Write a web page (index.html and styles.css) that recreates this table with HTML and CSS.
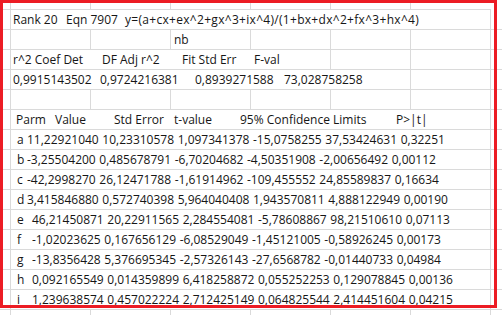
FILE: index.html
```html
<!DOCTYPE html>
<html>
<head>
<meta charset="utf-8">
<link rel="stylesheet" href="styles.css">
</head>
<body>
<div class="sheet">
  <div class="row top"><div class="c"></div><div class="c"></div><div class="c"></div><div class="c"></div><div class="c"></div><div class="c"></div><div class="c"></div></div>

  <div class="row"><div class="c"></div><div class="c span6 pl2"><span class="t w53">Rank 20</span><span class="t w59">Eqn 7907</span><span class="t formula">y=(a+cx+ex^2+gx^3+ix^4)/(1+bx+dx^2+fx^3+hx^4)</span></div><div class="c"></div></div>

  <div class="row"><div class="c"></div><div class="c"></div><div class="c"></div><div class="c pl3">nb</div><div class="c"></div><div class="c"></div><div class="c"></div><div class="c"></div></div>

  <div class="row"><div class="c"></div><div class="c span4 pl2"><span class="t w89">r^2 Coef Det</span><span class="t w80">DF Adj r^2</span><span class="t w72">Fit Std Err</span><span class="t">F-val</span></div><div class="c"></div><div class="c"></div><div class="c"></div></div>

  <div class="row"><div class="c"></div><div class="c span5 pl2"><span class="t w87">0,9915143502</span><span class="t w95">0,9724216381</span><span class="t w89">0,8939271588</span><span class="t">73,028758258</span></div><div class="c"></div><div class="c"></div></div>

  <div class="row"><div class="c"></div><div class="c"></div><div class="c"></div><div class="c"></div><div class="c"></div><div class="c"></div><div class="c"></div><div class="c"></div></div>

  <div class="row"><div class="c"></div><div class="c span6 pl5"><span class="t w39">Parm</span><span class="t w59">Value</span><span class="t w60">Std Error</span><span class="t w66">t-value</span><span class="t w156">95% Confidence Limits</span><span class="t">P&gt;|t|</span></div><div class="c"></div></div>

  <div class="row"><div class="c"></div><div class="c span6 pl6 data"><span class="t lab">a</span>11,22921040 10,23310578 1,097341378 -15,0758255 37,53424631 0,32251</div><div class="c"></div></div>
  <div class="row"><div class="c"></div><div class="c span6 pl6 data"><span class="t lab">b</span>-3,25504200 0,485678791 -6,70204682 -4,50351908 -2,00656492 0,00112</div><div class="c"></div></div>
  <div class="row"><div class="c"></div><div class="c span6 pl6 data"><span class="t lab">c</span>-42,2998270 26,12471788 -1,61914962 -109,455552 24,85589837 0,16634</div><div class="c"></div></div>
  <div class="row"><div class="c"></div><div class="c span6 pl6 data"><span class="t lab">d</span>3,415846880 0,572740398 5,964040408 1,943570811 4,888122949 0,00190</div><div class="c"></div></div>
  <div class="row"><div class="c"></div><div class="c span6 pl6 data"><span class="t lab wide">e</span>46,21450871 20,22911565 2,284554081 -5,78608867 98,21510610 0,07113</div><div class="c"></div></div>
  <div class="row"><div class="c"></div><div class="c span6 pl6 data"><span class="t lab wide">f</span>-1,02023625 0,167656129 -6,08529049 -1,45121005 -0,58926245 0,00173</div><div class="c"></div></div>
  <div class="row"><div class="c"></div><div class="c span6 pl6 data"><span class="t lab wide">g</span>-13,8356428 5,376695345 -2,57326143 -27,6568782 -0,01440733 0,04984</div><div class="c"></div></div>
  <div class="row"><div class="c"></div><div class="c span6 pl6 data"><span class="t lab wide">h</span>0,092165549 0,014359899 6,418258872 0,055252253 0,129078845 0,00136</div><div class="c"></div></div>
  <div class="row"><div class="c"></div><div class="c span6 pl6 data"><span class="t lab wide">i</span>1,239638574 0,457022224 2,712425149 0,064825544 2,414451604 0,04215</div><div class="c"></div></div>

  <div class="row"><div class="c"></div><div class="c"></div><div class="c"></div><div class="c"></div><div class="c"></div><div class="c"></div><div class="c"></div><div class="c"></div></div>
</div>
<div class="frame"></div>
</body>
</html>
```

FILE: styles.css
```css
* { box-sizing: border-box; }
html, body {
  margin: 0;
  height: 100%;
  overflow: hidden;
  background: #ffffff;
}
body {
  font-family: "Open Sans", Lato, sans-serif;
  font-size: 12px;
  color: #161616;
  position: relative;
}
.sheet {
  width: 502px;
  height: 315px;
  overflow: hidden;
}
.row {
  display: grid;
  grid-template-columns: 11px repeat(6, 80px) 11px;
  height: 20px;
}
.row.top { height: 10px; }
.c {
  border-right: 1px solid #dadada;
  border-bottom: 1px solid #dadada;
  white-space: pre;
  line-height: 19px;
}
.c:last-child { border-right: none; }
.span6 { grid-column: span 6; }
.span5 { grid-column: span 5; }
.span4 { grid-column: span 4; }
.pl2 { padding-left: 2px; }
.pl3 { padding-left: 3px; }
.pl5 { padding-left: 5px; }
.pl6 { padding-left: 6px; }
.t { display: inline-block; }
.formula { letter-spacing: 0.3px; }
.w39 { width: 39px; }
.w53 { width: 53px; }
.w59 { width: 59px; }
.w60 { width: 60px; }
.w66 { width: 66px; }
.w72 { width: 72px; }
.w80 { width: 80px; }
.w87 { width: 87px; }
.w89 { width: 89px; }
.w95 { width: 95px; }
.w156 { width: 156px; }
.data { word-spacing: 0.5px; }
.lab { width: 10px; }
.lab.wide { width: 15px; }
.frame {
  position: absolute;
  left: 0;
  top: 0;
  width: 497px;
  height: 308px;
  border: 3px solid #ec1c24;
}
```
